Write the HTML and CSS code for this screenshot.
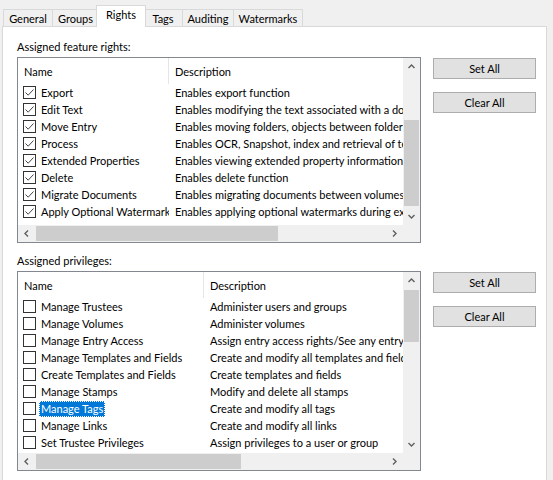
FILE: index.html
```html
<!DOCTYPE html>
<html lang="en">
<head>
    <meta charset="UTF-8">
    <title>Properties - Rights</title>
    <link rel="stylesheet" href="styles.css">
</head>
<body>
    <svg class="sprites" xmlns="http://www.w3.org/2000/svg">
        <symbol id="tick" viewBox="0 0 11 11">
            <polyline points="1.5,5.5 4.2,8.2 9.5,2.5" fill="none" stroke="#444" stroke-width="1"/>
        </symbol>
        <symbol id="arrow-up" viewBox="0 0 9 9">
            <polyline points="1.5,6 4.5,3 7.5,6" fill="none" stroke="#606060" stroke-width="1.4"/>
        </symbol>
        <symbol id="arrow-down" viewBox="0 0 9 9">
            <polyline points="1.5,3 4.5,6 7.5,3" fill="none" stroke="#606060" stroke-width="1.4"/>
        </symbol>
        <symbol id="arrow-left" viewBox="0 0 9 9">
            <polyline points="6,1.5 3,4.5 6,7.5" fill="none" stroke="#606060" stroke-width="1.4"/>
        </symbol>
        <symbol id="arrow-right" viewBox="0 0 9 9">
            <polyline points="3,1.5 6,4.5 3,7.5" fill="none" stroke="#606060" stroke-width="1.4"/>
        </symbol>
    </svg>

    <div class="dialog">
        <!-- Tab strip -->
        <div class="tabs">
            <div class="tab tab--general">General</div>
            <div class="tab tab--groups">Groups</div>
            <div class="tab tab--rights is-active">Rights</div>
            <div class="tab tab--tags">Tags</div>
            <div class="tab tab--auditing">Auditing</div>
            <div class="tab tab--watermarks">Watermarks</div>
        </div>

        <div class="panel">
            <!-- Feature rights -->
            <section class="group">
                <div class="group-label">Assigned feature rights:</div>
                <div class="group-body">
                    <div class="listview listview--rights">
                        <div class="lv-view">
                            <div class="lv-header">
                                <div class="lv-col lv-col--name">Name</div>
                                <div class="lv-col lv-col--desc">Description</div>
                            </div>
                            <div class="lv-row">
                                <span class="lv-name"><span class="check"><svg><use href="#tick"/></svg></span>Export</span>
                                <span class="lv-desc">Enables export function</span>
                            </div>
                            <div class="lv-row">
                                <span class="lv-name"><span class="check"><svg><use href="#tick"/></svg></span>Edit Text</span>
                                <span class="lv-desc">Enables modifying the text associated with a document</span>
                            </div>
                            <div class="lv-row">
                                <span class="lv-name"><span class="check"><svg><use href="#tick"/></svg></span>Move Entry</span>
                                <span class="lv-desc">Enables moving folders, objects between folders</span>
                            </div>
                            <div class="lv-row">
                                <span class="lv-name"><span class="check"><svg><use href="#tick"/></svg></span>Process</span>
                                <span class="lv-desc">Enables OCR, Snapshot, index and retrieval of text</span>
                            </div>
                            <div class="lv-row">
                                <span class="lv-name"><span class="check"><svg><use href="#tick"/></svg></span>Extended Properties</span>
                                <span class="lv-desc">Enables viewing extended property information</span>
                            </div>
                            <div class="lv-row">
                                <span class="lv-name"><span class="check"><svg><use href="#tick"/></svg></span>Delete</span>
                                <span class="lv-desc">Enables delete function</span>
                            </div>
                            <div class="lv-row">
                                <span class="lv-name"><span class="check"><svg><use href="#tick"/></svg></span>Migrate Documents</span>
                                <span class="lv-desc">Enables migrating documents between volumes</span>
                            </div>
                            <div class="lv-row">
                                <span class="lv-name"><span class="check"><svg><use href="#tick"/></svg></span>Apply Optional Watermark</span>
                                <span class="lv-desc">Enables applying optional watermarks during export</span>
                            </div>
                        </div>
                        <div class="vscroll">
                            <div class="sb-btn"><svg><use href="#arrow-up"/></svg></div>
                            <div class="sb-track"><div class="sb-thumb"></div></div>
                            <div class="sb-btn"><svg><use href="#arrow-down"/></svg></div>
                        </div>
                        <div class="hscroll">
                            <div class="sb-btn"><svg><use href="#arrow-left"/></svg></div>
                            <div class="sb-track"><div class="sb-thumb"></div></div>
                            <div class="sb-btn"><svg><use href="#arrow-right"/></svg></div>
                        </div>
                        <div class="corner"></div>
                    </div>
                    <div class="actions">
                        <button class="btn">Set All</button>
                        <button class="btn">Clear All</button>
                    </div>
                </div>
            </section>

            <!-- Privileges -->
            <section class="group group--privileges">
                <div class="group-label">Assigned privileges:</div>
                <div class="group-body">
                    <div class="listview listview--privileges">
                        <div class="lv-view">
                            <div class="lv-header">
                                <div class="lv-col lv-col--name">Name</div>
                                <div class="lv-col lv-col--desc">Description</div>
                            </div>
                            <div class="lv-row">
                                <span class="lv-name"><span class="check"></span>Manage Trustees</span>
                                <span class="lv-desc">Administer users and groups</span>
                            </div>
                            <div class="lv-row">
                                <span class="lv-name"><span class="check"></span>Manage Volumes</span>
                                <span class="lv-desc">Administer volumes</span>
                            </div>
                            <div class="lv-row">
                                <span class="lv-name"><span class="check"></span>Manage Entry Access</span>
                                <span class="lv-desc">Assign entry access rights/See any entry</span>
                            </div>
                            <div class="lv-row">
                                <span class="lv-name"><span class="check"></span>Manage Templates and Fields</span>
                                <span class="lv-desc">Create and modify all templates and fields</span>
                            </div>
                            <div class="lv-row">
                                <span class="lv-name"><span class="check"></span>Create Templates and Fields</span>
                                <span class="lv-desc">Create templates and fields</span>
                            </div>
                            <div class="lv-row">
                                <span class="lv-name"><span class="check"></span>Manage Stamps</span>
                                <span class="lv-desc">Modify and delete all stamps</span>
                            </div>
                            <div class="lv-row">
                                <span class="lv-name"><span class="check"></span><span class="selected">Manage Tags</span></span>
                                <span class="lv-desc">Create and modify all tags</span>
                            </div>
                            <div class="lv-row">
                                <span class="lv-name"><span class="check"></span>Manage Links</span>
                                <span class="lv-desc">Create and modify all links</span>
                            </div>
                            <div class="lv-row">
                                <span class="lv-name"><span class="check"></span>Set Trustee Privileges</span>
                                <span class="lv-desc">Assign privileges to a user or group</span>
                            </div>
                        </div>
                        <div class="vscroll">
                            <div class="sb-btn"><svg><use href="#arrow-up"/></svg></div>
                            <div class="sb-track"><div class="sb-thumb"></div></div>
                            <div class="sb-btn"><svg><use href="#arrow-down"/></svg></div>
                        </div>
                        <div class="hscroll">
                            <div class="sb-btn"><svg><use href="#arrow-left"/></svg></div>
                            <div class="sb-track"><div class="sb-thumb"></div></div>
                            <div class="sb-btn"><svg><use href="#arrow-right"/></svg></div>
                        </div>
                        <div class="corner"></div>
                    </div>
                    <div class="actions">
                        <button class="btn">Set All</button>
                        <button class="btn">Clear All</button>
                    </div>
                </div>
            </section>
        </div>
    </div>
</body>
</html>
```

FILE: styles.css
```css
:root {
    --face: #f0f0f0;
    --tab-border: #d9d9d9;
    --list-border: #828790;
    --thumb: #cdcdcd;
    --text: #000000;
    --select: #0078d7;
}

body {
    margin: 0;
    background: var(--face);
    font-family: 'Lato', 'Liberation Sans', sans-serif;
    font-size: 11px;
    color: var(--text);
    overflow: hidden;
}

.sprites {
    display: none;
}

/* Tab strip */
.tabs {
    display: flex;
    align-items: flex-end;
    height: 26px;
    padding-left: 3px;
}

.tab {
    box-sizing: border-box;
    height: 17px;
    border: 1px solid var(--tab-border);
    border-bottom: none;
    margin-left: -1px;
    background: var(--face);
    display: flex;
    align-items: center;
    justify-content: center;
    line-height: 15px;
}

.tab--general { width: 50px; margin-left: 0; }
.tab--groups { width: 47px; }
.tab--tags { width: 40px; }
.tab--auditing { width: 52px; }
.tab--watermarks { width: 70px; }

.tab.is-active {
    width: 50px;
    height: 22px;
    margin-left: -3px;
    margin-right: -2px;
    margin-bottom: -1px;
    background: #ffffff;
    position: relative;
    z-index: 1;
    padding-bottom: 4px;
}

/* Tab page */
.panel {
    box-sizing: border-box;
    margin-left: 2px;
    width: 545px;
    min-height: 470px;
    background: #ffffff;
    border: 1px solid var(--tab-border);
    padding: 12px 0 0 14px;
}

.group-label {
    height: 15px;
    line-height: 15px;
    margin-bottom: 3px;
}

.group--privileges {
    margin-top: 10px;
}

.group-body {
    display: flex;
    gap: 12px;
}

/* List view */
.listview {
    box-sizing: border-box;
    width: 404px;
    border: 1px solid var(--list-border);
    display: grid;
    grid-template-columns: 1fr 17px;
    grid-template-rows: 1fr 17px;
    background: #ffffff;
}

.listview--rights { height: 186px; }
.listview--privileges { height: 200px; }

.lv-view {
    overflow: hidden;
    min-width: 0;
}

.lv-header {
    display: flex;
    height: 26px;
    align-items: center;
    white-space: nowrap;
}

.lv-col {
    padding-left: 6px;
    line-height: 15px;
}

.lv-col--name {
    box-sizing: border-box;
    flex: none;
    height: 26px;
    display: flex;
    align-items: center;
    border-right: 1px solid #e5e5e5;
}

.listview--rights .lv-col--name,
.listview--rights .lv-name { width: 151px; }
.listview--privileges .lv-col--name,
.listview--privileges .lv-name { width: 186px; }

.lv-row {
    display: flex;
    height: 17px;
    align-items: center;
    white-space: nowrap;
}

.lv-name {
    box-sizing: border-box;
    flex: none;
    display: flex;
    align-items: center;
    padding-left: 5px;
    overflow: hidden;
}

.lv-desc {
    padding-left: 6px;
}

.check {
    box-sizing: border-box;
    flex: none;
    width: 13px;
    height: 13px;
    border: 1px solid #333333;
    background: #ffffff;
    margin-right: 5px;
    display: flex;
}

.check svg {
    width: 11px;
    height: 11px;
}

.selected {
    background: var(--select);
    color: #ffffff;
    outline: 1px dotted #ffffff;
    outline-offset: -1px;
    margin-left: -2px;
    padding: 0 2px;
    line-height: 16px;
}

/* Scrollbars */
.vscroll,
.hscroll {
    background: var(--face);
    display: flex;
}

.vscroll { flex-direction: column; }

.sb-btn {
    flex: none;
    width: 17px;
    height: 17px;
    display: flex;
    align-items: center;
    justify-content: center;
}

.sb-btn svg {
    width: 9px;
    height: 9px;
}

.sb-track {
    flex: 1;
    display: flex;
}

.vscroll .sb-track { flex-direction: column; }

.sb-thumb {
    background: var(--thumb);
}

.vscroll .sb-thumb { margin: 0 1px; }
.hscroll .sb-thumb { margin: 1px 0; }

.listview--rights .vscroll .sb-thumb { margin-top: 45px; height: 86px; }
.listview--privileges .vscroll .sb-thumb { margin-top: 1px; height: 52px; }
.listview--rights .hscroll .sb-thumb { margin-left: 1px; width: 242px; }
.listview--privileges .hscroll .sb-thumb { margin-left: 1px; width: 205px; }

.corner {
    background: var(--face);
}

/* Buttons */
.actions {
    display: flex;
    flex-direction: column;
    gap: 13px;
    padding-top: 1px;
}

.btn {
    box-sizing: border-box;
    width: 103px;
    height: 21px;
    padding: 0;
    background: #e1e1e1;
    border: 1px solid #adadad;
    font-family: inherit;
    font-size: 11px;
    color: var(--text);
}
```
